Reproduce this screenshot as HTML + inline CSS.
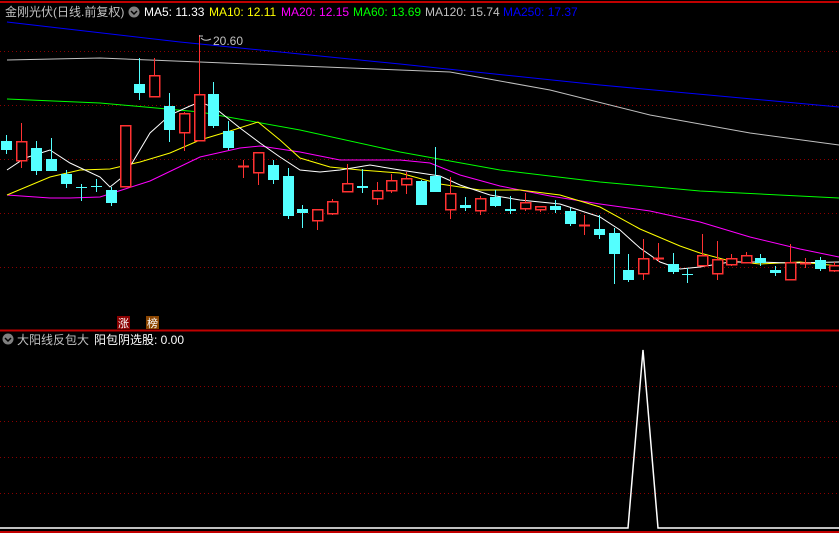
<!DOCTYPE html>
<html><head><meta charset="utf-8"><style>
html,body{margin:0;padding:0;background:#000;width:839px;height:533px;overflow:hidden}
svg{display:block}
text{font-family:"Liberation Sans","Noto Sans CJK SC",sans-serif;font-size:12px}
</style></head><body>
<svg width="839" height="533" xmlns="http://www.w3.org/2000/svg">
<rect width="839" height="533" fill="#000"/>
<line x1="0" y1="2" x2="839" y2="2" stroke="#c00000" stroke-width="2"/>
<g stroke="#8b0000" stroke-dasharray="1,3" stroke-width="1">
<line x1="0" y1="51.5" x2="839" y2="51.5"/><line x1="0" y1="105.5" x2="839" y2="105.5"/>
<line x1="0" y1="159.5" x2="839" y2="159.5"/><line x1="0" y1="213.5" x2="839" y2="213.5"/>
<line x1="0" y1="267.5" x2="839" y2="267.5"/>
<line x1="0" y1="386.5" x2="839" y2="386.5"/><line x1="0" y1="421.5" x2="839" y2="421.5"/>
<line x1="0" y1="457.5" x2="839" y2="457.5"/><line x1="0" y1="493.5" x2="839" y2="493.5"/>
</g>
<line x1="0" y1="330.5" x2="839" y2="330.5" stroke="#c00000" stroke-width="2"/>
<line x1="0" y1="532" x2="839" y2="532" stroke="#c00000" stroke-width="2"/>
<g fill="none" stroke-width="1">
<polyline stroke="#0000ff" points="7,22 180,42 400,64 600,85 839,107"/>
<polyline stroke="#c0c0c0" points="7,60 100,58 200,62 300,66 450,72 550,90 650,115 750,133 839,145"/>
<polyline stroke="#00ff00" points="7,99 100,103 200,112 300,130 400,152 500,170 600,182 700,191 839,198"/>
<polyline stroke="#ff00ff" points="7,195 50,198 70,198 100,197 150,181 200,157 240,148 260,146 300,152 340,160 400,160 430,163 460,175 500,186 550,196 600,204 650,211 700,222 750,237 800,249 839,257"/>
<polyline stroke="#ffff00" points="7,195 50,177 80,170 110,169 140,162 170,153 200,140 230,131 258,122 280,140 300,158 330,167 360,170 400,173 440,184 480,190 520,190 560,195 600,207 640,229 680,246 700,253 730,261 760,264 800,262 839,266"/>
<polyline stroke="#ffffff" points="7,170 25,158 50,150 70,163 100,177 110,187 125,175 150,133 170,115 190,106 200,102 215,108 240,128 260,143 280,157 300,170 320,172 340,170 370,165 400,170 440,176 460,185 490,195 520,200 560,204 600,217 620,230 640,248 660,262 680,269 700,267 730,262 760,262 790,263 839,262"/>
</g>
<g id="c" shape-rendering="crispEdges"></g>
<text x="5" y="16" fill="#c0c0c0">金刚光伏(日线.前复权)</text>
<circle cx="134" cy="12" r="5.5" fill="#808080"/><path d="M131,11 L134,14 L137,11" stroke="#000" fill="none" stroke-width="1.5"/>
<text x="144" y="16" fill="#fff">MA5: 11.33</text>
<text x="209" y="16" fill="#ffff00">MA10: 12.11</text>
<text x="281" y="16" fill="#ff00ff">MA20: 12.15</text>
<text x="353" y="16" fill="#00ff00">MA60: 13.69</text>
<text x="425" y="16" fill="#c0c0c0">MA120: 15.74</text>
<text x="503" y="16" fill="#0000ff">MA250: 17.37</text>
<text x="213" y="45" fill="#c0c0c0">20.60</text>
<path d="M199,36 h4 M201,38 q4,4 10,1" stroke="#c0c0c0" fill="none"/>
<rect x="117" y="316" width="13" height="13" fill="#8b0000"/><text x="118" y="327" fill="#fff" style="font-size:11px">涨</text>
<rect x="146" y="316" width="13" height="13" fill="#8b4500"/><text x="147" y="327" fill="#fff" style="font-size:11px">榜</text>
<circle cx="8" cy="339" r="5.5" fill="#808080"/><path d="M5,338 L8,341 L11,338" stroke="#000" fill="none" stroke-width="1.5"/>
<text x="17" y="344" fill="#c0c0c0">大阳线反包大</text>
<text x="94" y="344" fill="#fff">阳包阴选股: 0.00</text>
<polyline fill="none" stroke="#fff" stroke-width="1.5" points="0,528 628,528 643,350 658,528 839,528"/>
</svg>
<script>
var d=[[6,141,150,135,154,0],[21,141,160,123,168,1],[36,148,171,141,175,0],[51,159,171,138,171,0],[66,174,184,170,188,0],[81,187,187,184,201,0],[96,186,186,179,192,0],[111,190,203,187,206,0],[125,125,186,125,186,1],[139,84,93,58,100,0],[154,75,96,58,97,1],[169,106,130,93,142,0],[184,113,132,112,151,1],[199,94,140,35,140,1],[213,94,126,82,128,0],[228,131,148,121,150,0],[243,166,166,160,178,1],[258,152,172,152,185,1],[273,165,180,160,184,0],[288,176,216,168,219,0],[302,209,213,205,228,0],[317,209,220,209,230,1],[332,201,213,199,215,1],[347,183,191,164,191,1],[362,186,188,169,193,0],[377,190,198,182,205,1],[391,180,190,174,193,1],[406,178,184,172,194,1],[421,181,205,180,205,0],[435,176,192,147,192,0],[450,193,209,177,219,1],[465,205,208,197,211,0],[480,198,210,196,215,1],[495,197,206,190,207,0],[510,209,211,196,214,0],[525,202,208,193,211,1],[540,206,209,206,212,1],[555,206,210,200,213,0],[570,211,224,208,226,0],[584,225,225,215,235,1],[599,229,235,215,239,0],[614,233,254,228,284,0],[628,270,280,254,282,0],[643,258,273,239,280,1],[658,258,258,243,262,1],[673,264,272,253,274,0],[687,274,274,268,283,0],[702,255,265,234,265,1],[717,259,273,241,280,1],[731,258,264,254,266,1],[746,255,262,252,262,1],[760,258,263,254,266,0],[775,270,273,266,276,0],[790,262,279,244,279,1],[805,263,263,258,268,1],[820,260,269,257,271,0],[834,265,270,262,272,1]];
var g=document.getElementById('c'),s='';
d.forEach(function(c){var x=c[0],col=c[5]?'#ff3232':'#54ffff';
s+='<line x1="'+(x+.5)+'" y1="'+c[3]+'" x2="'+(x+.5)+'" y2="'+c[4]+'" stroke="'+col+'"/>';
if(c[2]-c[1]<2){s+='<line x1="'+(x-5)+'" y1="'+(c[1]+.5)+'" x2="'+(x+6)+'" y2="'+(c[1]+.5)+'" stroke="'+col+'" stroke-width="'+(c[5]?2:1)+'"/>';}
else if(c[5]){s+='<rect x="'+(x-4.5)+'" y="'+(c[1]+.5)+'" width="10" height="'+(c[2]-c[1])+'" fill="#000" stroke="'+col+'" stroke-width="1.5"/>';}
else{s+='<rect x="'+(x-5)+'" y="'+c[1]+'" width="11" height="'+(c[2]-c[1])+'" fill="'+col+'"/>';}});
g.innerHTML=s;
</script>
</body></html>
